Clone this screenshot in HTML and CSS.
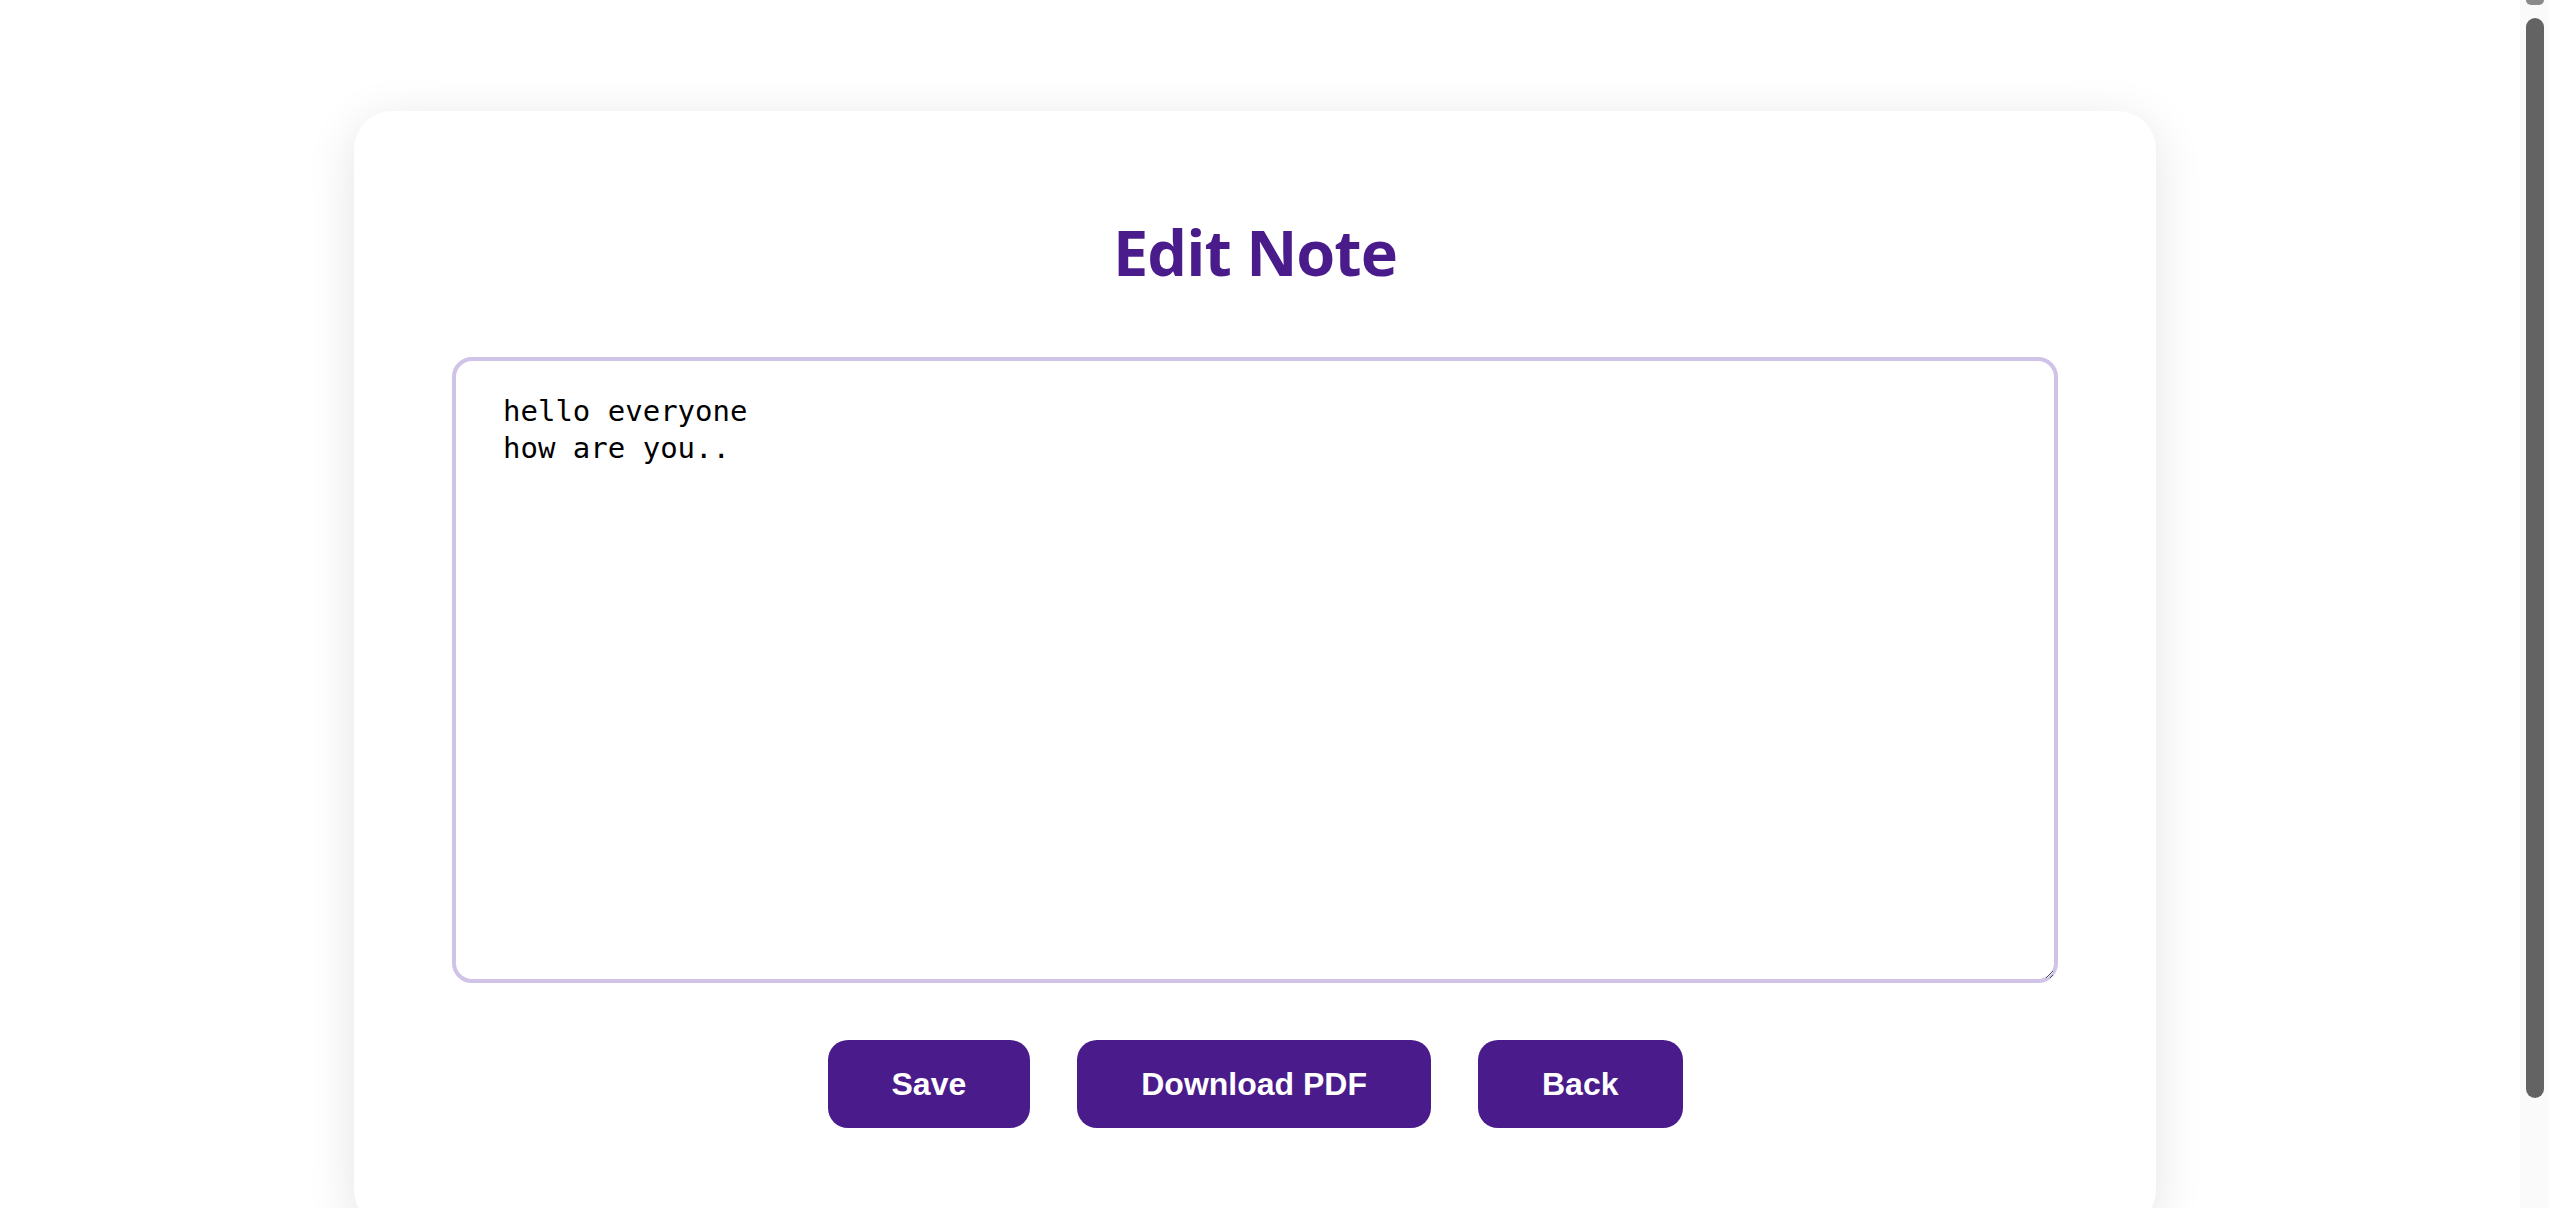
FILE: index.html
```html
<!DOCTYPE html>
<html lang="en">
<head>
<meta charset="utf-8">
<title>Edit Note</title>
<link rel="stylesheet" href="styles.css">
</head>
<body>
<div class="page">
  <main class="card">
    <h1 class="title">Edit Note</h1>
    <textarea class="note" spellcheck="false">hello everyone
how are you..</textarea>
    <div class="actions">
      <button class="btn" type="button">Save</button>
      <button class="btn" type="button">Download PDF</button>
      <button class="btn" type="button">Back</button>
    </div>
  </main>
</div>
<div class="scrollbar" aria-hidden="true">
  <span class="scrollbar-arrow"></span>
  <span class="scrollbar-thumb"></span>
</div>
</body>
</html>
```

FILE: styles.css
```css
html {
  background: #ffffff;
}

body {
  margin: 0;
  background: #ffffff;
}

.page {
  padding: 111px 39px 84px 0;
}

.card {
  box-sizing: border-box;
  width: 1802px;
  margin: 0 auto;
  padding: 101px 98px 100px;
  background: #ffffff;
  border-radius: 38px;
  box-shadow: 0 10px 50px rgba(0, 0, 0, 0.11);
}

.title {
  margin: 0 0 65px;
  font-family: "Open Sans", "Noto Sans", sans-serif;
  font-weight: 700;
  font-size: 63px;
  line-height: 80px;
  letter-spacing: -1px;
  color: #4a1b8a;
  text-align: center;
}

.note {
  display: block;
  box-sizing: border-box;
  width: 100%;
  height: 626px;
  margin: 0 0 57px;
  padding: 32px 47px;
  border: 4px solid #cfc3e8;
  border-radius: 20px;
  font-family: "DejaVu Sans Mono", monospace;
  font-size: 29px;
  line-height: 37px;
  color: #000000;
  background: #ffffff;
  resize: vertical;
  outline: none;
}

.actions {
  display: flex;
  justify-content: center;
  gap: 47px;
}

.btn {
  height: 88px;
  padding: 0 64px;
  border: none;
  border-radius: 20px;
  background: #4a1b8a;
  color: #ffffff;
  font-family: "Liberation Sans", Arial, sans-serif;
  font-weight: 700;
  font-size: 32px;
  cursor: pointer;
}

.scrollbar {
  position: fixed;
  top: 0;
  right: 0;
  width: 29px;
  height: 100%;
  background: #fafafa;
}

.scrollbar-arrow {
  position: absolute;
  top: 0;
  left: 6px;
  width: 18px;
  height: 5px;
  background: #8a8a8a;
  border-radius: 0 0 6px 6px;
}

.scrollbar-thumb {
  position: absolute;
  top: 18px;
  left: 6px;
  width: 18px;
  height: 1080px;
  background: #636363;
  border-radius: 9px;
}
```
